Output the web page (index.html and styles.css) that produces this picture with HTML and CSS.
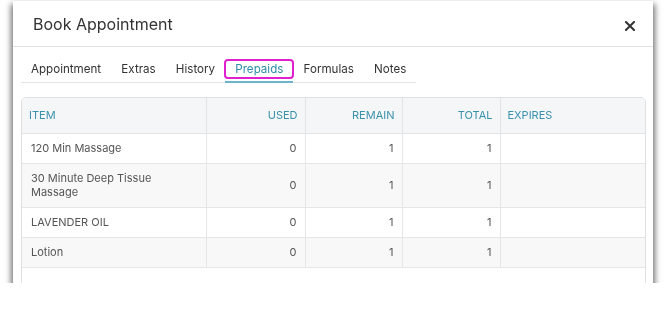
FILE: index.html
```html
<!DOCTYPE html>
<html>

<head>
    <title>Book Appointment</title>
    <meta name="viewport" content="width=device-width, initial-scale=1">
    <link rel="stylesheet" href="styles.css">
</head>
<body>
    <div class="dialog">
        <div class="dialog-header">
            <h2 class="dialog-title">Book Appointment</h2>
            <button class="close-button" aria-label="Close">
                <svg width="10" height="10" viewBox="0 0 10 10">
                    <path d="M1 1 L9 9 M9 1 L1 9" stroke="#333" stroke-width="2" stroke-linecap="square"/>
                </svg>
            </button>
        </div>

        <div class="dialog-body">
            <ul class="tabs">
                <li class="tab">Appointment</li>
                <li class="tab">Extras</li>
                <li class="tab">History</li>
                <li class="tab active">Prepaids</li>
                <li class="tab">Formulas</li>
                <li class="tab">Notes</li>
            </ul>

            <div class="table-wrap">
                <table class="prepaids">
                    <thead>
                        <tr>
                            <th class="col-item">Item</th>
                            <th class="num col-used">Used</th>
                            <th class="num col-remain">Remain</th>
                            <th class="num col-total">Total</th>
                            <th class="col-expires">Expires</th>
                        </tr>
                    </thead>
                    <tbody>
                        <tr>
                            <td>120 Min Massage</td>
                            <td class="num">0</td>
                            <td class="num">1</td>
                            <td class="num">1</td>
                            <td></td>
                        </tr>
                        <tr class="tall">
                            <td>30 Minute Deep Tissue<br>Massage</td>
                            <td class="num">0</td>
                            <td class="num">1</td>
                            <td class="num">1</td>
                            <td></td>
                        </tr>
                        <tr>
                            <td>LAVENDER OIL</td>
                            <td class="num">0</td>
                            <td class="num">1</td>
                            <td class="num">1</td>
                            <td></td>
                        </tr>
                        <tr>
                            <td>Lotion</td>
                            <td class="num">0</td>
                            <td class="num">1</td>
                            <td class="num">1</td>
                            <td></td>
                        </tr>
                    </tbody>
                </table>
            </div>
        </div>
    </div>
</body>

</html>
```

FILE: styles.css
```css
body {
    margin: 0;
    padding: 1px 0 0 13px;
    font-family: Inter, "Noto Sans", sans-serif;
    background-color: #ffffff;
    color: #333333;
}

.dialog {
    width: 640px;
    height: 282px;
    background-color: #ffffff;
    overflow: hidden;
    will-change: transform;
    box-shadow: 0 2px 0 0 #1a1a1a, 0 5px 6px 2px rgba(0, 0, 0, 0.55);
}

.dialog-header {
    display: flex;
    align-items: center;
    justify-content: space-between;
    height: 45px;
    padding: 0 16px 0 20px;
    border-bottom: 1px solid #e2e2e2;
}

.dialog-title {
    margin: 1px 0 0;
    font-size: 16px;
    font-weight: 400;
    color: #333333;
}

.close-button {
    display: flex;
    align-items: center;
    justify-content: center;
    width: 14px;
    height: 14px;
    margin-top: 4px;
    padding: 0;
    border: none;
    background: none;
}

.dialog-body {
    padding: 10px 7px 0 8px;
}

.tabs {
    display: flex;
    width: max-content;
    margin: 0;
    padding: 0;
    list-style: none;
    border-bottom: 1px solid #e4e4e4;
}

.tab {
    position: relative;
    padding: 5px 10.1px 5px;
    font-size: 11.6px;
    line-height: 14px;
    color: #333333;
    border-bottom: 2px solid transparent;
    margin-bottom: -1px;
}

.tab:first-child {
    padding-left: 10px;
}

.tab.active {
    color: #2f8ca6;
    border-bottom-color: #6cb4cc;
}

.tab.active::before {
    content: "";
    position: absolute;
    left: -1px;
    right: -1px;
    top: 2px;
    bottom: 2px;
    border: 2px solid #e01fcf;
    border-radius: 4px;
}

.table-wrap {
    margin-top: 14px;
    height: 200px;
    border: 1px solid #e0e0e0;
    border-radius: 5px;
    overflow: hidden;
}

.prepaids {
    width: 100%;
    border-collapse: collapse;
    table-layout: fixed;
    font-size: 11px;
    color: #555555;
}

.prepaids th,
.prepaids td {
    box-sizing: border-box;
}

.prepaids th {
    height: 35px;
    padding: 0 7px;
    font-weight: 400;
    font-size: 11px;
    text-transform: uppercase;
    text-align: left;
    color: #3a91ab;
    background-color: #f5f6f8;
    border-right: 1px solid #e3e3e3;
    border-bottom: 1px solid #e3e3e3;
}

.prepaids td {
    height: 30px;
    padding: 0 8px 0 9px;
    line-height: 14px;
    border-right: 1px solid #e6e6e6;
    border-bottom: 1px solid #e6e6e6;
}

.prepaids tr.tall td {
    height: 44px;
}

.prepaids th:last-child,
.prepaids td:last-child {
    border-right: none;
}

.prepaids tbody tr:nth-child(even) {
    background-color: #f8f8f8;
}

.prepaids .num {
    text-align: right;
}

.col-item { width: 184px; }
.col-used { width: 99px; }
.col-remain { width: 97px; }
.col-total { width: 98px; }
```
